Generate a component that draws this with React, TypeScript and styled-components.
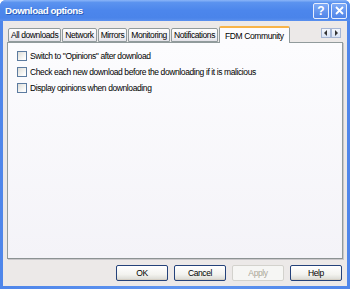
import React from "react";
import styled, { createGlobalStyle } from "styled-components";

const Global = createGlobalStyle`
  html, body { margin: 0; padding: 0; width: 350px; height: 289px; overflow: hidden; }
  body { font-family: "Liberation Sans", Arial, sans-serif; }
`;

const Window = styled.div`
  width: 350px;
  height: 289px;
  box-sizing: border-box;
  display: flex;
  flex-direction: column;
  background: linear-gradient(90deg, #4f86ea, #5f95f0 50%, #4f86ea);
  padding: 0 3px 3px 3px;
  border-radius: 6px 6px 0 0;
`;

const TitleBar = styled.div`
  height: 22px;
  margin: 0 -3px;
  padding: 0 3px 0 5px;
  display: flex;
  align-items: center;
  justify-content: space-between;
  border-radius: 6px 6px 0 0;
  background: linear-gradient(180deg, #8bb5f8 0%, #5b93ef 12%, #4c86ec 50%, #4a84ea 85%, #5a90ee 100%);
`;

const Title = styled.span`
  color: #fff;
  font-weight: bold;
  font-size: 9.8px;
  letter-spacing: -0.45px;
  text-shadow: 1px 1px 0 #2b5cb8;
`;

const Caption = styled.div`
  display: flex;
  gap: 2px;
`;

const CapBtn = styled.div`
  width: 16px;
  height: 16px;
  box-sizing: border-box;
  border: 1px solid #e8eefc;
  border-radius: 2px;
  background: linear-gradient(180deg, #7eaaf6, #4f84e8);
  color: #fff;
  font-weight: bold;
  font-size: 12px;
  display: flex;
  align-items: center;
  justify-content: center;
`;

const Body = styled.div`
  flex: 1;
  background: #ece9e8;
  display: flex;
  flex-direction: column;
  padding: 6px 4px 5px 4px;
`;

const TabBar = styled.div`
  display: flex;
  align-items: flex-end;
  height: 15px;
  padding-left: 1px;
  position: relative;
`;

const Tab = styled.div<{ $active?: boolean }>`
  box-sizing: border-box;
  height: ${(p) => (p.$active ? "17px" : "14px")};
  margin-right: 1px;
  margin-bottom: ${(p) => (p.$active ? "-1px" : "0")};
  padding: 0 ${(p) => (p.$active ? "5px" : "2px")};
  border: 1px solid #919b9c;
  border-bottom: ${(p) => (p.$active ? "none" : "1px solid #919b9c")};
  border-top: ${(p) => (p.$active ? "2px solid #f8b448" : "1px solid #919b9c")};
  border-radius: 2px 2px 0 0;
  background: ${(p) => (p.$active ? "#fcfcfe" : "linear-gradient(180deg, #fefefe, #f0eff4 70%, #e3e2e8)")};
  font-size: 8.5px;
  letter-spacing: -0.4px;
  color: #000;
  display: flex;
  align-items: center;
  white-space: nowrap;
  position: relative;
  z-index: ${(p) => (p.$active ? 2 : 1)};
`;

const Scroller = styled.div`
  position: absolute;
  right: 2px;
  top: 1px;
  display: flex;
`;

const ScrollBtn = styled.div`
  width: 10px;
  height: 10px;
  box-sizing: border-box;
  border: 1px solid #a6b6d4;
  background: linear-gradient(180deg, #f4f7fd, #d8e2f4);
  display: flex;
  align-items: center;
  justify-content: center;
`;

const Panel = styled.div`
  height: 217px;
  box-sizing: border-box;
  border: 1px solid #919b9c;
  border-bottom-color: #8c9293;
  box-shadow: 1px 1px 0 #c9c7ca;
  background: linear-gradient(180deg, #fcfcfe, #f4f3f8);
  padding: 6px 0 0 9px;
  display: flex;
  flex-direction: column;
  gap: 3px;
`;

const Row = styled.label`
  display: flex;
  align-items: center;
  gap: 3px;
  height: 13px;
  font-size: 8.5px;
  letter-spacing: -0.4px;
  color: #000;
`;

const Box = styled.span`
  width: 10px;
  height: 10px;
  box-sizing: border-box;
  border: 1px solid #5c7ba0;
  background: linear-gradient(135deg, #dcdcd7, #fdfdfc 80%);
`;

const Footer = styled.div`
  display: flex;
  justify-content: flex-end;
  gap: 6px;
  padding: 6px 1px 0 0;
`;

const Button = styled.div<{ $disabled?: boolean }>`
  width: 52px;
  height: 16px;
  box-sizing: border-box;
  border: 1px solid ${(p) => (p.$disabled ? "#d3d2cd" : "#24427a")};
  border-radius: 2px;
  background: ${(p) =>
    p.$disabled ? "#f6f6f4" : "linear-gradient(180deg, #ffffff, #f3f3ef 60%, #d8d8d2)"};
  box-shadow: ${(p) => (p.$disabled ? "none" : "inset 0 -1px 0 #d6d0c5")};
  color: ${(p) => (p.$disabled ? "#aca899" : "#000")};
  font-size: 8.5px;
  letter-spacing: -0.4px;
  display: flex;
  align-items: center;
  justify-content: center;
`;

const Arrow = ({ dir }: { dir: "l" | "r" }) => (
  <svg width="4" height="6" viewBox="0 0 4 6">
    {dir === "l" ? <path d="M3 0 L0 3 L3 6 Z" fill="#333" /> : <path d="M1 0 L4 3 L1 6 Z" fill="#333" />}
  </svg>
);

const tabs = ["All downloads", "Network", "Mirrors", "Monitoring", "Notifications", "FDM Community"];
const options = [
  "Switch to \"Opinions\" after download",
  "Check each new download before the downloading if it is malicious",
  "Display opinions when downloading",
];

export default function App() {
  return (
    <>
      <Global />
      <Window>
        <TitleBar>
          <Title>Download options</Title>
          <Caption>
            <CapBtn>?</CapBtn>
            <CapBtn>
              <svg width="9" height="9" viewBox="0 0 9 9">
                <path d="M1 1 L8 8 M8 1 L1 8" stroke="#fff" strokeWidth="1.8" />
              </svg>
            </CapBtn>
          </Caption>
        </TitleBar>
        <Body>
          <TabBar>
            {tabs.map((t, i) => (
              <Tab key={t} $active={i === tabs.length - 1}>
                {t}
              </Tab>
            ))}
            <Scroller>
              <ScrollBtn>
                <Arrow dir="l" />
              </ScrollBtn>
              <ScrollBtn>
                <Arrow dir="r" />
              </ScrollBtn>
            </Scroller>
          </TabBar>
          <Panel>
            {options.map((o) => (
              <Row key={o}>
                <Box />
                {o}
              </Row>
            ))}
          </Panel>
          <Footer>
            <Button>OK</Button>
            <Button>Cancel</Button>
            <Button $disabled>Apply</Button>
            <Button>Help</Button>
          </Footer>
        </Body>
      </Window>
    </>
  );
}
